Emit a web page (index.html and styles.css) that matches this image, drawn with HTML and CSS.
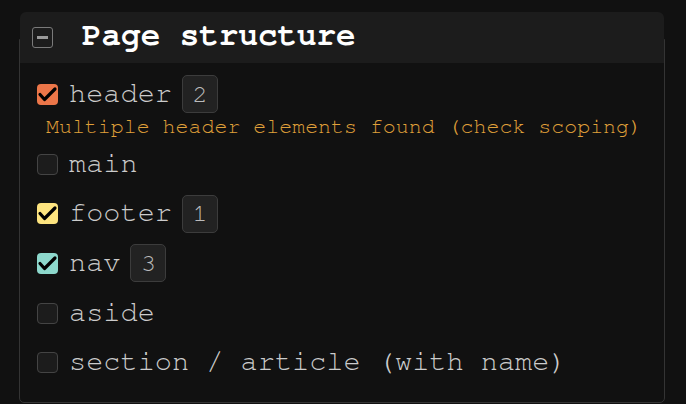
FILE: index.html
```html
<!DOCTYPE html>
<html>
<head>
<meta charset="utf-8">
<link rel="stylesheet" href="styles.css">
</head>
<body>
<div class="panel">
  <div class="panel-head">
    <span class="collapse"><span class="bar"></span></span>
    <span class="title">Page structure</span>
  </div>
  <div class="list">
    <div class="row">
      <span class="cb on orange"><svg viewBox="0 0 21 21"><polyline points="3,10.5 7.5,15.5 18,5"/></svg></span>
      <span class="label">header</span>
      <span class="badge">2</span>
    </div>
    <div class="warn">Multiple header elements found (check scoping)</div>
    <div class="row">
      <span class="cb"></span>
      <span class="label">main</span>
    </div>
    <div class="row">
      <span class="cb on yellow"><svg viewBox="0 0 21 21"><polyline points="3,10.5 7.5,15.5 18,5"/></svg></span>
      <span class="label">footer</span>
      <span class="badge">1</span>
    </div>
    <div class="row">
      <span class="cb on teal"><svg viewBox="0 0 21 21"><polyline points="3,10.5 7.5,15.5 18,5"/></svg></span>
      <span class="label">nav</span>
      <span class="badge">3</span>
    </div>
    <div class="row">
      <span class="cb"></span>
      <span class="label">aside</span>
    </div>
    <div class="row">
      <span class="cb"></span>
      <span class="label">section / article (with name)</span>
    </div>
  </div>
</div>
</body>
</html>
```
FILE: styles.css
```css
html, body {
  margin: 0;
  padding: 0;
  background: #111111;
}
body {
  padding-top: 39px;
  font-family: "Nimbus Mono PS", "Nimbus Mono L", "FreeMono", "Courier New", "Liberation Mono", monospace;
}
.panel {
  margin-left: 19px;
  width: 644px;
  height: 362px;
  border: 1px solid #343434;
  border-radius: 0 0 5px 5px;
}
.panel-head {
  margin-top: -28px;
  height: 51px;
  background: #1c1c1c;
  border-radius: 6px 6px 0 0;
  display: flex;
  align-items: center;
  padding-left: 12px;
}
.collapse {
  width: 19px;
  height: 19px;
  border: 1.5px solid #7a7a7a;
  border-radius: 3px;
  display: flex;
  align-items: center;
  justify-content: center;
}
.collapse .bar {
  width: 11px;
  height: 3px;
  background: #9a9a9a;
}
.title {
  margin-left: 29px;
  padding-bottom: 2px;
  color: #ffffff;
  font-weight: bold;
  font-size: 32.6px;
  line-height: 1;
}
.list {
  padding: 12px 0 0 17px;
  display: flex;
  flex-direction: column;
}
.row {
  display: flex;
  align-items: center;
  height: 38px;
  margin-bottom: 11.7px;
}
.row:first-child {
  margin-bottom: 2px;
}
.cb {
  box-sizing: border-box;
  width: 21px;
  height: 21px;
  border: 1px solid #444444;
  background: #1c1c1c;
  border-radius: 4px;
  margin-right: 11px;
  flex: none;
}
.cb.on {
  border: none;
}
.cb svg {
  display: block;
  width: 21px;
  height: 21px;
}
.cb polyline {
  fill: none;
  stroke: #000000;
  stroke-width: 3.2;
  stroke-linecap: round;
  stroke-linejoin: round;
}
.orange { background: #ec7649; }
.yellow { background: #fde47f; }
.teal { background: #8dd8cc; }
.label {
  color: #cccccc;
  font-size: 28.6px;
  line-height: 1;
}
.badge {
  box-sizing: border-box;
  margin-left: 10px;
  width: 36px;
  height: 38px;
  border: 1px solid #3c3c3c;
  background: #222222;
  border-radius: 5px;
  color: #bbbbbb;
  font-size: 25px;
  display: flex;
  align-items: center;
  justify-content: center;
}
.warn {
  margin-left: 9px;
  color: #e0a13a;
  font-size: 21.6px;
  line-height: 24px;
  margin-bottom: 6px;
}
```
